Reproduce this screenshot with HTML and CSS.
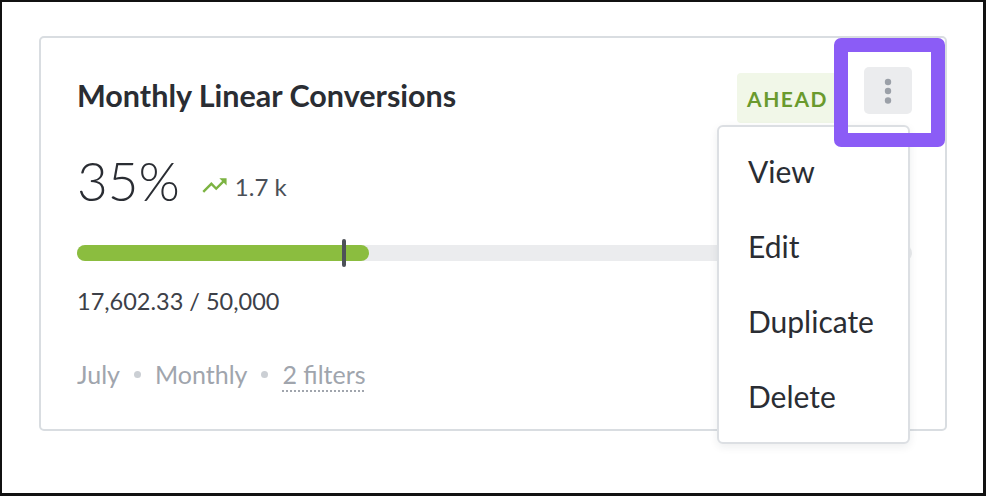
FILE: index.html
```html
<!DOCTYPE html>
<html lang="en">
<head>
<meta charset="utf-8">
<title>Goal card</title>
<link rel="stylesheet" href="styles.css">
</head>
<body>
<div class="frame">
  <div class="card">
    <div class="header">
      <h2 class="title">Monthly Linear Conversions</h2>
      <div class="actions">
        <span class="badge">AHEAD</span>
        <div class="kebab-wrap">
          <button class="kebab" aria-label="More options">
            <svg width="8" height="26" viewBox="0 0 8 26"><circle cx="4" cy="4" r="3.2"/><circle cx="4" cy="13" r="3.2"/><circle cx="4" cy="22.5" r="3.2"/></svg>
          </button>
          <div class="highlight"></div>
          <ul class="menu">
            <li>View</li>
            <li>Edit</li>
            <li>Duplicate</li>
            <li>Delete</li>
          </ul>
        </div>
      </div>
    </div>
    <div class="stats">
      <span class="pct">35%</span>
      <svg class="trend" width="29" height="29" viewBox="0 0 24 24"><path d="M16 6l2.29 2.29-4.88 4.88-4-4L2 16.59 3.41 18l6-6 4 4 6.3-6.29L22 12V6z"/></svg>
      <span class="delta">1.7 k</span>
    </div>
    <div class="track">
      <div class="fill" style="width:35%"></div>
      <div class="marker" style="left:32%"></div>
    </div>
    <div class="amount">17,602.33 / 50,000</div>
    <div class="meta">
      <span>July</span><span class="dot"></span><span>Monthly</span><span class="dot"></span><span class="filters">2 filters</span>
    </div>
  </div>
</div>
</body>
</html>
```
FILE: styles.css
```css
* { box-sizing: border-box; }
html, body { margin: 0; padding: 0; background: #fff; }
body { font-family: Lato, "Noto Sans", sans-serif; color: #2a2d33; }

.frame {
  width: 986px;
  height: 496px;
  border-style: solid;
  border-color: #111;
  border-width: 2px 3px 3px 2px;
  padding: 34px 0 0 37px;
}

.card {
  position: relative;
  width: 908px;
  height: 395px;
  border: 2px solid #d9dde1;
  border-radius: 5px;
  padding: 29px 33px 0 36px;
}

.header {
  display: flex;
  justify-content: space-between;
  align-items: flex-start;
}

.title {
  margin: 10px 0 0;
  font-size: 30.5px;
  line-height: 36px;
  font-weight: 700;
  color: #2a2d33;
}

.actions {
  display: flex;
  align-items: flex-start;
  gap: 26px;
}

.badge {
  margin-top: 6px;
  height: 50px;
  padding: 0 10px;
  display: flex;
  align-items: center;
  background: #f1f7e8;
  color: #6a9a2e;
  font-size: 21px;
  font-weight: 700;
  letter-spacing: 1.5px;
  border-radius: 4px;
}

.kebab-wrap { position: relative; }

.kebab {
  display: flex;
  align-items: center;
  justify-content: center;
  width: 48px;
  height: 47px;
  border: 0;
  padding: 0;
  background: #ebecee;
  border-radius: 5px;
}
.kebab svg { fill: #9ba0a8; }

.highlight {
  position: absolute;
  top: -29px;
  left: -30px;
  right: -33px;
  bottom: -33px;
  border: 14px solid #8b5cf6;
  border-radius: 7px;
  z-index: 3;
  pointer-events: none;
}

.menu {
  position: absolute;
  top: 58px;
  right: 2px;
  width: 193px;
  margin: 0;
  padding: 7px 0 8px;
  list-style: none;
  background: #fff;
  border: 2px solid #dcdfe3;
  border-radius: 6px;
  box-shadow: 0 3px 8px rgba(30, 35, 45, 0.08);
  z-index: 2;
}
.menu li {
  padding-left: 29px;
  font-size: 30px;
  line-height: 75px;
  color: #2a2d33;
}

.stats {
  display: flex;
  align-items: flex-start;
  margin-top: 23px;
  height: 70px;
}
.pct {
  font-size: 53px;
  font-weight: 300;
  line-height: 70px;
  color: #2a2d33;
}
.trend {
  fill: #7cb342;
  margin: 25px 6px 0 20px;
}
.delta {
  margin-top: 27px;
  font-size: 24px;
  line-height: 28.8px;
  color: #4a4f57;
}

.track {
  position: relative;
  margin-top: 29px;
  height: 16px;
  background: #ebecee;
  border-radius: 8px;
}
.fill {
  height: 16px;
  background: #8bbd3f;
  border-radius: 8px;
}
.marker {
  position: absolute;
  top: -6px;
  width: 3.5px;
  height: 28px;
  margin-left: -2px;
  background: #4d5158;
  border-radius: 2px;
}

.amount {
  margin-top: 23px;
  font-size: 23.5px;
  line-height: 34px;
  color: #3c4048;
}

.meta {
  display: flex;
  align-items: center;
  margin-top: 38px;
  font-size: 25px;
  line-height: 36px;
  color: #a0a5ad;
}
.dot {
  width: 7px;
  height: 7px;
  border-radius: 50%;
  background: #cbcfd4;
  margin: 0 14px;
}
.filters {
  text-decoration: underline dotted #a0a5ad;
  text-decoration-thickness: 2px;
  text-underline-offset: 6px;
}
```
